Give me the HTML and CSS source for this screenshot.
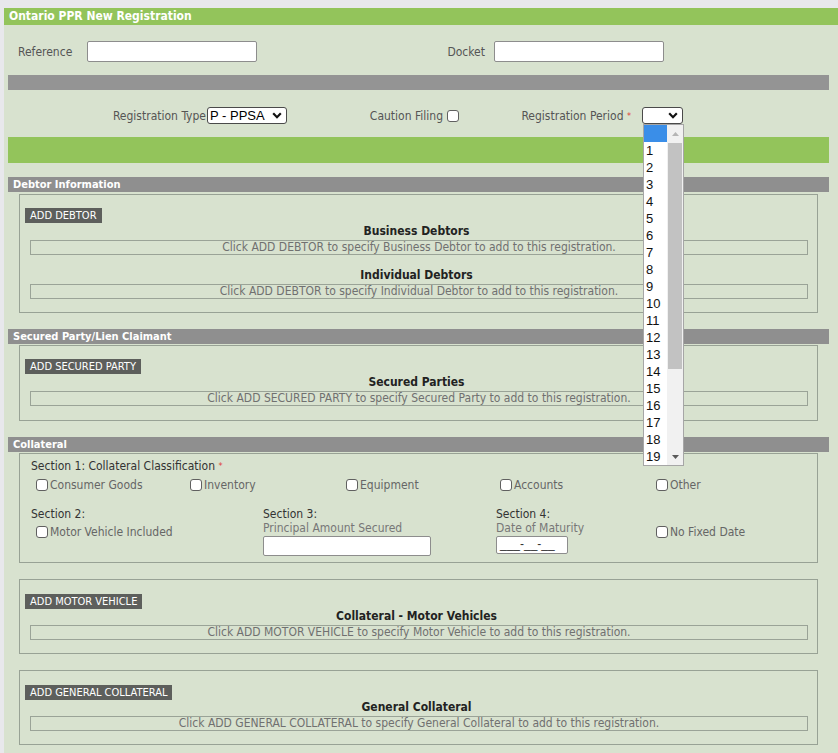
FILE: index.html
```html
<!DOCTYPE html>
<html>
<head>
<meta charset="utf-8">
<title>Ontario PPR New Registration</title>
<link rel="stylesheet" href="styles.css">
</head>
<body>
<div class="page">
  <div class="title">Ontario PPR New Registration</div>

  <div class="refrow">
    <div class="refcell">
      <label class="lbl ref-lbl">Reference</label>
      <input class="txt" type="text">
    </div>
    <div class="refcell">
      <label class="lbl dock-lbl">Docket</label>
      <input class="txt" type="text">
    </div>
  </div>

  <div class="bar gray"></div>

  <div class="regrow">
    <div class="regcell">
      <span class="lbl">Registration Type</span>
      <div class="select sel-type"><span>P - PPSA</span>
        <svg class="chev" width="10" height="7" viewBox="0 0 10 7"><path d="M1.2 1.3 L5 5.2 L8.8 1.3" fill="none" stroke="#111" stroke-width="2.2"/></svg>
      </div>
    </div>
    <div class="regcell">
      <span class="lbl cf-lbl">Caution Filing</span>
      <span class="cb"></span>
    </div>
    <div class="regcell">
      <span class="lbl rp-lbl">Registration Period <span class="req">*</span></span>
      <div class="select sel-period"><span></span>
        <svg class="chev" width="10" height="7" viewBox="0 0 10 7"><path d="M1.2 1.3 L5 5.2 L8.8 1.3" fill="none" stroke="#111" stroke-width="2.2"/></svg>
      </div>
    </div>
  </div>

  <div class="bar green"></div>

  <section class="sec first">
    <div class="sec-head">Debtor Information</div>
    <div class="box">
      <div class="btn">ADD DEBTOR</div>
      <div class="grp-title">Business Debtors</div>
      <div class="msg">Click ADD DEBTOR to specify Business Debtor to add to this registration.</div>
      <div class="grp-title spaced">Individual Debtors</div>
      <div class="msg">Click ADD DEBTOR to specify Individual Debtor to add to this registration.</div>
    </div>
  </section>

  <section class="sec">
    <div class="sec-head">Secured Party/Lien Claimant</div>
    <div class="box">
      <div class="btn">ADD SECURED PARTY</div>
      <div class="grp-title">Secured Parties</div>
      <div class="msg">Click ADD SECURED PARTY to specify Secured Party to add to this registration.</div>
    </div>
  </section>

  <section class="sec">
    <div class="sec-head">Collateral</div>
    <div class="box coll">
      <div class="sec-lbl">Section 1: Collateral Classification <span class="req">*</span></div>
      <div class="classes">
        <label class="chk"><span class="cb"></span>Consumer Goods</label>
        <label class="chk"><span class="cb"></span>Inventory</label>
        <label class="chk"><span class="cb"></span>Equipment</label>
        <label class="chk"><span class="cb"></span>Accounts</label>
        <label class="chk"><span class="cb"></span>Other</label>
      </div>
      <div class="sections">
        <div class="scol">
          <div class="sec-lbl">Section 2:</div>
          <label class="chk mv"><span class="cb"></span>Motor Vehicle Included</label>
        </div>
        <div class="scol">
          <div class="sec-lbl">Section 3:</div>
          <div class="sub-lbl">Principal Amount Secured</div>
          <input class="txt amount" type="text">
        </div>
        <div class="scol">
          <div class="sec-lbl">Section 4:</div>
          <div class="sub-lbl">Date of Maturity</div>
          <div class="date">___-__-__</div>
        </div>
        <div class="scol nfd">
          <label class="chk"><span class="cb"></span>No Fixed Date</label>
        </div>
      </div>
    </div>
    <div class="box sub">
      <div class="btn">ADD MOTOR VEHICLE</div>
      <div class="grp-title">Collateral - Motor Vehicles</div>
      <div class="msg">Click ADD MOTOR VEHICLE to specify Motor Vehicle to add to this registration.</div>
    </div>
    <div class="box sub">
      <div class="btn">ADD GENERAL COLLATERAL</div>
      <div class="grp-title">General Collateral</div>
      <div class="msg">Click ADD GENERAL COLLATERAL to specify General Collateral to add to this registration.</div>
    </div>
  </section>
</div>

<div class="dropdown">
  <div class="opts">
    <div class="opt sel"></div>
    <div class="opt">1</div><div class="opt">2</div><div class="opt">3</div><div class="opt">4</div>
    <div class="opt">5</div><div class="opt">6</div><div class="opt">7</div><div class="opt">8</div>
    <div class="opt">9</div><div class="opt">10</div><div class="opt">11</div><div class="opt">12</div>
    <div class="opt">13</div><div class="opt">14</div><div class="opt">15</div><div class="opt">16</div>
    <div class="opt">17</div><div class="opt">18</div><div class="opt">19</div>
  </div>
  <div class="sbar">
    <div class="sb-up"><svg width="7" height="4" viewBox="0 0 7 4"><path d="M0 4 L3.5 0 L7 4 Z" fill="#b5b5b5"/></svg></div>
    <div class="sb-thumb"></div>
    <div class="sb-track"></div>
    <div class="sb-down"><svg width="7" height="4" viewBox="0 0 7 4"><path d="M0 0 L3.5 4 L7 0 Z" fill="#5a5a5a"/></svg></div>
  </div>
</div>
</body>
</html>
```

FILE: styles.css
```css
* { box-sizing: border-box; }
html, body { margin: 0; padding: 0; }
body {
  width: 838px;
  height: 753px;
  overflow: hidden;
  position: relative;
  background: #e8e8ec;
  font-family: "DejaVu Sans Condensed", "DejaVu Sans", sans-serif;
  font-stretch: condensed;
  font-size: 12px;
  color: #555;
}
.page {
  margin: 8px 0 0 4px;
  background: #d8e2cf;
  height: 745px;
}
.title {
  height: 17px;
  line-height: 17px;
  background: #93c45b;
  color: #fff;
  font-weight: bold;
  font-size: 12px;
  padding-left: 5px;
}
.refrow {
  display: flex;
  height: 50px;
  padding: 16px 0 13px 14px;
}
.refcell { display: flex; align-items: center; }
.lbl { color: #555; white-space: nowrap; }
.ref-lbl { width: 69px; }
.dock-lbl { width: 228px; text-align: right; margin-right: 9px; }
.txt {
  width: 170px;
  height: 21px;
  border: 1px solid #8d8d8d;
  border-radius: 2px;
  background: #fff;
  margin: 0;
  padding: 0;
}
.bar { height: 15px; margin: 0 9px 0 4px; background: #949494; }
.bar.green { height: 26px; background: #93c45b; }
.regrow {
  display: grid;
  grid-template-columns: 283px 172px 224px;
  height: 47px;
  padding-top: 17px;
}
.regcell {
  display: flex;
  justify-content: flex-end;
  align-items: center;
  height: 17px;
}
.select {
  display: flex;
  align-items: center;
  justify-content: space-between;
  height: 17px;
  border: 1px solid #4a4a4a;
  border-radius: 3px;
  background: #fff;
  font-family: "Liberation Sans", Arial, sans-serif;
  font-size: 13px;
  color: #000;
  padding: 0 4px 0 2px;
}
.sel-type { width: 80px; margin-left: 1px; }
.sel-period { width: 41px; margin-left: 11px; }
.cf-lbl { margin-right: 4px; }
.req { color: #e0403a; font-size: 9px; vertical-align: 1px; }
.cb {
  display: inline-block;
  width: 12px;
  height: 12px;
  border: 1px solid #606060;
  border-radius: 3px;
  background: #fff;
  flex: none;
}
.sec { margin-top: 16px; }
.sec.first { margin-top: 14px; }
.sec-head {
  height: 15px;
  line-height: 15px;
  margin: 0 9px 0 4px;
  background: #8f8f8f;
  color: #fff;
  font-weight: bold;
  font-size: 11px;
  padding-left: 5px;
}
.box {
  margin: 1px 20px 0 15px;
  border: 1px solid #98a295;
  padding: 13px 9px 14px 5px;
}
.sec.first .box { margin-top: 2px; padding-bottom: 13px; }
.box.sub { margin-top: 16px; padding-top: 14px; padding-bottom: 13px; }
.btn {
  display: inline-block;
  height: 15px;
  line-height: 15px;
  background: #5d5f5c;
  color: #fff;
  font-size: 11px;
  padding: 0 5px;
  vertical-align: top;
}
.grp-title {
  text-align: center;
  font-weight: bold;
  font-size: 12px;
  color: #222;
  line-height: 15px;
  margin-top: 1px;
}
.box.sub .grp-title { margin-top: 0; }
.grp-title.spaced { margin-top: 13px; }
.msg {
  margin: 1px 0 0 5px;
  height: 15px;
  line-height: 13px;
  border: 1px solid #9aa397;
  text-align: center;
  color: #707070;
}
.box.coll { padding: 5px 0 6px 11px; }
.sec-lbl { color: #333; line-height: 14px; }
.classes {
  display: grid;
  grid-template-columns: 154px 156px 154px 156px 1fr;
  margin: 5px 0 0 5px;
}
.chk {
  display: flex;
  align-items: center;
  gap: 2px;
  height: 14px;
  color: #666;
  white-space: nowrap;
}
.sections {
  display: grid;
  grid-template-columns: 232px 233px 160px 1fr;
  margin-top: 15px;
}
.chk.mv { margin: 4px 0 0 5px; }
.sub-lbl { color: #777; line-height: 14px; }
.amount { width: 168px; height: 20px; margin-top: 1px; display: block; }
.date {
  width: 72px;
  height: 18px;
  margin-top: 1px;
  border: 1px solid #8d8d8d;
  border-radius: 2px;
  background: #fff;
  font-family: "Liberation Sans", Arial, sans-serif;
  font-size: 12px;
  color: #333;
  line-height: 15px;
  padding-left: 3px;
}
.nfd { padding-top: 18px; }

.dropdown {
  position: absolute;
  left: 643px;
  top: 124px;
  width: 41px;
  height: 342px;
  border: 1px solid #a6a6a6;
  background: #fff;
  display: flex;
}
.opts { flex: 1; }
.opt {
  height: 17px;
  line-height: 17px;
  font-family: "Liberation Sans", Arial, sans-serif;
  font-size: 13px;
  color: #111;
  padding-left: 2px;
}
.opt.sel { background: #3a8ee8; }
.sbar {
  width: 16px;
  background: #f1f1f1;
  display: flex;
  flex-direction: column;
}
.sb-up { height: 18px; display: flex; align-items: center; justify-content: center; }
.sb-thumb { height: 226px; background: #c2c2c2; margin: 0 1px; }
.sb-track { flex: 1; }
.sb-down { height: 17px; display: flex; align-items: center; justify-content: center; }
```
